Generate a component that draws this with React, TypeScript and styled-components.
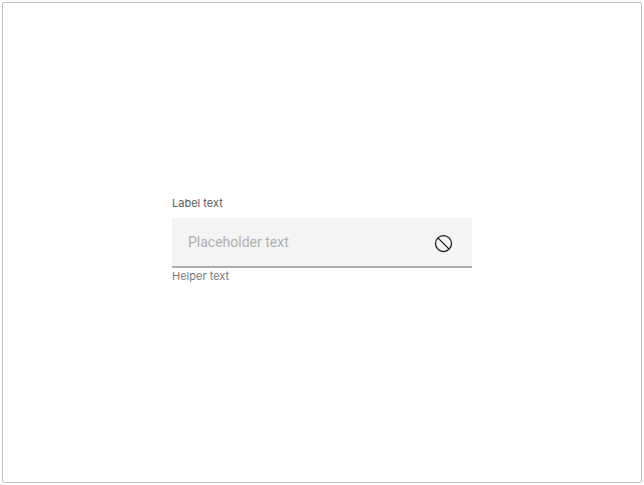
import React from "react";
import styled, { createGlobalStyle } from "styled-components";

const GlobalStyle = createGlobalStyle`
  *, *::before, *::after { box-sizing: border-box; }
  body { margin: 0; background: #fff; font-family: Roboto, "Liberation Sans", sans-serif; }
`;

const Page = styled.main`
  min-height: 100vh;
  padding: 2px;
  display: flex;
`;

const Frame = styled.section`
  flex: 1;
  display: flex;
  align-items: center;
  justify-content: center;
  padding-bottom: 7px;
  border: 1px solid #c1c1c1;
  border-radius: 2px;
`;

const Field = styled.div`
  width: 100%;
  max-width: 300px;
  display: flex;
  flex-direction: column;
  color: #5a5a5a;
  font-family: Inter, "Liberation Sans", sans-serif;
  font-size: 11px;
  line-height: 16px;
`;

const Label = styled.label`
  margin-bottom: 7px;
`;

const Control = styled.div`
  display: flex;
  align-items: center;
  height: 50px;
  padding: 0 19px 0 16px;
  background: #f4f4f4;
  box-shadow: inset 0 -2px #acacac;
`;

const Input = styled.input`
  flex: 1;
  min-width: 0;
  height: 48px;
  padding: 0 0 2px;
  border: 0;
  outline: 0;
  background: transparent;
  color: #161616;
  font-family: Roboto, "Liberation Sans", sans-serif;
  font-size: 14px;
  &::placeholder { color: #b0b0b0; opacity: 1; }
`;

const Helper = styled.p`
  margin: 0;
  color: #777;
`;

const ReadOnlyIcon = () => (
  <svg width="20" height="20" viewBox="0 0 20 20" fill="none" stroke="#161616" strokeWidth="1.25" aria-hidden="true">
    <circle cx="10.5" cy="10.5" r="8" />
    <path d="M4.9 4.9 16.1 16.1" />
  </svg>
);

export default function App() {
  return (
    <>
      <GlobalStyle />
      <Page>
        <Frame>
          <Field>
            <Label htmlFor="text-field">Label text</Label>
            <Control>
              <Input id="text-field" type="text" placeholder="Placeholder text" aria-describedby="helper" readOnly />
              <ReadOnlyIcon />
            </Control>
            <Helper id="helper">Helper text</Helper>
          </Field>
        </Frame>
      </Page>
    </>
  );
}
